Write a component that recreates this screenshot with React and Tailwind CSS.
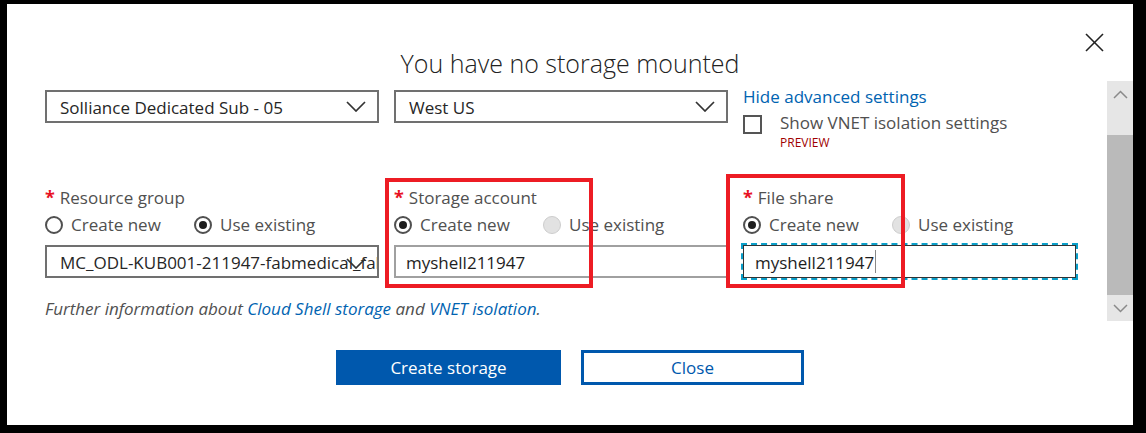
import React from "react";

function Chevron({ className = "" }) {
  return (
    <svg width="20" height="11" viewBox="0 0 20 11" className={className}>
      <polyline points="1,1 10,10 19,1" fill="none" stroke="#333" strokeWidth="1.7" />
    </svg>
  );
}

function Radio({ checked, disabled }) {
  if (disabled) {
    return <span className="w-[18px] h-[18px] rounded-full bg-[#e2e2e2] border border-[#cdcdcd] shrink-0" />;
  }
  return (
    <span className="w-[18px] h-[18px] rounded-full border-2 border-[#505050] flex items-center justify-center shrink-0">
      {checked && <span className="w-[8px] h-[8px] rounded-full bg-[#1e1e1e]" />}
    </span>
  );
}

function RadioRow({ first, secondDisabled }) {
  return (
    <div className="flex items-center h-[22px] mt-[5px] text-[17px] leading-[22px] text-[#505050]">
      <div className="w-[149px] flex items-center gap-[8px]">
        <Radio checked={first} />
        <span>Create new</span>
      </div>
      <div className="flex items-center gap-[8px]">
        <Radio checked={!first && !secondDisabled} disabled={secondDisabled} />
        <span>Use existing</span>
      </div>
    </div>
  );
}

function Label({ children }) {
  return (
    <div className="h-[22px] text-[17px] leading-[22px] text-[#505050] flex">
      <span className="text-[#e81123] text-[18px] mr-[5px] font-bold leading-[20px]">*</span>
      <span>{children}</span>
    </div>
  );
}

export default function App() {
  return (
    <div className="w-[1146px] h-[433px] bg-black pt-[4px] pl-[7px] font-['Open_Sans','Noto_Sans',sans-serif]">
      <div className="relative w-[1126px] h-[421px] bg-white flex flex-col">
        {/* header */}
        <div className="h-[77px] pt-[41px] flex justify-center">
          <h1 className="text-[25px] leading-[36px] font-light text-[#222]">You have no storage mounted</h1>
        </div>
        <button className="absolute left-[1078px] top-[29px] w-[19px] h-[19px]">
          <svg width="19" height="19" viewBox="0 0 19 19">
            <line x1="1" y1="1" x2="18" y2="18" stroke="#222" strokeWidth="1.6" />
            <line x1="18" y1="1" x2="1" y2="18" stroke="#222" strokeWidth="1.6" />
          </svg>
        </button>

        {/* scroll region */}
        <div className="flex h-[240px]">
          <div className="flex-1 pl-[38px] pt-[9px]">
            {/* row 1 */}
            <div className="flex gap-[15px] h-[33px]">
              <div className="w-[334px] h-[33px] border-2 border-[#707070] flex items-center justify-between pl-[13px] pr-[11px] text-[17px] text-[#262626]">
                <span className="pt-[3px]">Solliance Dedicated Sub - 05</span>
                <Chevron />
              </div>
              <div className="w-[334px] h-[33px] border-2 border-[#707070] flex items-center justify-between pl-[13px] pr-[11px] text-[17px] text-[#262626]">
                <span className="pt-[3px]">West US</span>
                <Chevron />
              </div>
              <div className="-mt-[4px] flex flex-col">
                <span className="text-[17px] leading-[22px] text-[#0063b1]">Hide advanced settings</span>
                <div className="flex mt-[4px]">
                  <span className="w-[19px] h-[19px] border-2 border-[#555] mt-[3px] shrink-0" />
                  <div className="ml-[18px] flex flex-col">
                    <span className="text-[17px] leading-[22px] text-[#505050]">Show VNET isolation settings</span>
                    <span className="text-[12px] leading-[16px] text-[#a00000] mt-[1px]">PREVIEW</span>
                  </div>
                </div>
              </div>
            </div>

            {/* row 2 */}
            <div className="flex gap-[15px] mt-[64px]">
              <div className="w-[334px] flex flex-col">
                <Label>Resource group</Label>
                <RadioRow first={false} />
                <div className="relative mt-[9px] w-[334px] h-[33px] border-2 border-[#707070] flex items-center pl-[13px] pt-[2px] overflow-hidden text-[17px] text-[#262626] whitespace-nowrap">
                  <span>MC_ODL-KUB001-211947-fabmedical_fabmedical</span>
                  <Chevron className="absolute right-[11px] top-[11px]" />
                </div>
              </div>
              <div className="w-[334px] flex flex-col">
                <Label>Storage account</Label>
                <RadioRow first={true} secondDisabled />
                <div className="mt-[9px] w-[334px] h-[33px] border-2 border-[#a0a0a0] flex items-center pl-[10px] pt-[2px] text-[17px] text-[#1e1e1e]">
                  myshell211947
                </div>
              </div>
              <div className="w-[335px] flex flex-col">
                <Label>File share</Label>
                <RadioRow first={true} secondDisabled />
                <div className="mt-[9px] w-[333px] h-[33px] border border-[#333] outline-2 outline-dashed outline-[#0a9fc9] flex items-center pl-[11px] text-[17px] text-[#1e1e1e]">
                  <span className="pt-[2px]">myshell211947</span>
                  <span className="w-px h-[23px] bg-[#888] ml-[1px]" />
                </div>
              </div>
            </div>

            {/* further info */}
            <p className="mt-[20px] text-[17px] leading-[22px] italic text-[#505050]">
              Further information about <span className="text-[#0063b1]">Cloud Shell storage</span> and{" "}
              <span className="text-[#0063b1]">VNET isolation</span>.
            </p>
          </div>

          {/* scrollbar */}
          <div className="w-[26px] h-[240px] bg-[#e6e6e6] flex flex-col">
            <div className="h-[54px] flex justify-center pt-[9px]">
              <svg width="15" height="9" viewBox="0 0 15 9">
                <polyline points="1,8 7.5,1.5 14,8" fill="none" stroke="#8a8a8a" strokeWidth="1.5" />
              </svg>
            </div>
            <div className="h-[160px] bg-[#bababa]" />
            <div className="flex-1 flex justify-center pt-[9px]">
              <svg width="15" height="9" viewBox="0 0 15 9">
                <polyline points="1,1 7.5,7.5 14,1" fill="none" stroke="#8a8a8a" strokeWidth="1.5" />
              </svg>
            </div>
          </div>
        </div>

        {/* buttons */}
        <div className="flex justify-center gap-[20px] pt-[29px]">
          <button className="w-[225px] h-[35px] bg-[#0058ad] text-white text-[17px]">Create storage</button>
          <button className="w-[223px] h-[35px] border-[3px] border-[#0058ad] bg-white text-[#0058ad] text-[17px]">Close</button>
        </div>

        {/* highlight overlays */}
        <div className="absolute left-[378px] top-[174px] w-[208px] h-[110px] border-4 border-[#ed1c24] pointer-events-none" />
        <div className="absolute left-[719px] top-[170px] w-[179px] h-[114px] border-4 border-[#ed1c24] pointer-events-none" />
      </div>
    </div>
  );
}
